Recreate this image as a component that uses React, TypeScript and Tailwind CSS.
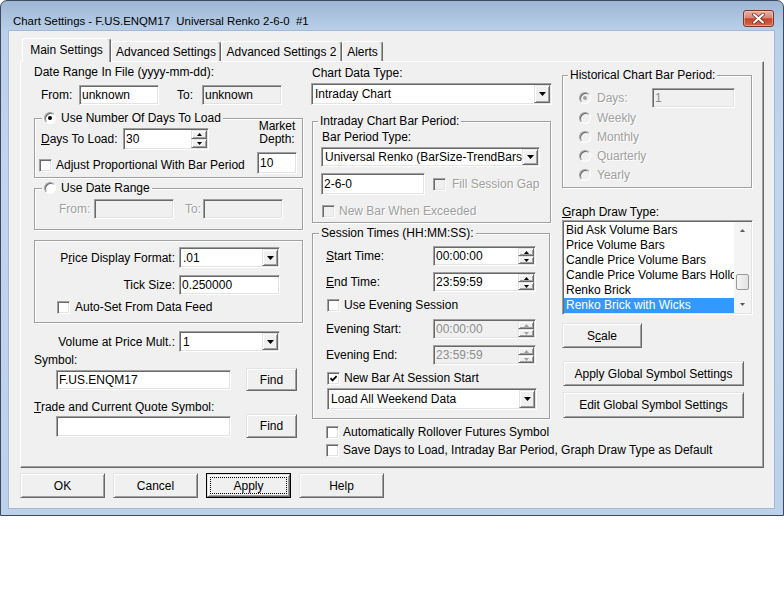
import React from "react";

const RAISED =
  "border border-t-[#e3e3e3] border-l-[#e3e3e3] border-r-[#696969] border-b-[#696969] bg-[#f0f0f0] shadow-[inset_1px_1px_0_#fff,inset_-1px_-1px_0_#a0a0a0]";
const SUNKEN =
  "border border-t-[#a0a0a0] border-l-[#a0a0a0] border-r-white border-b-white shadow-[inset_1px_1px_0_#696969,inset_-1px_-1px_0_#e3e3e3]";
const GROUP = "border border-[#a0a0a0] shadow-[1px_1px_0_#fff,inset_1px_1px_0_#fff]";
const DIS = "text-[#a0a0a0] [text-shadow:1px_1px_0_#fff]";
const TAB =
  "flex items-center justify-center rounded-t-[3px] border-l border-t border-r border-l-white border-t-white border-r-[#696969] shadow-[inset_-1px_0_0_#a0a0a0]";

function Tri({ up = false, color = "#000", small = false }: { up?: boolean; color?: string; small?: boolean }) {
  const w = small ? 5 : 7;
  const h = small ? 3 : 4;
  const d = up ? `M0 ${h}H${w}L${w / 2} 0Z` : `M0 0H${w}L${w / 2} ${h}Z`;
  return (
    <svg width={w} height={h} viewBox={`0 0 ${w} ${h}`}>
      <path d={d} fill={color} />
    </svg>
  );
}

function Spin({ disabled = false }: { disabled?: boolean }) {
  const c = disabled ? "#a0a0a0" : "#000";
  return (
    <div className="flex w-[16px] shrink-0 flex-col self-stretch">
      <div className={`${RAISED} flex flex-1 items-center justify-center`}>
        <Tri up small color={c} />
      </div>
      <div className={`${RAISED} flex flex-1 items-center justify-center`}>
        <Tri small color={c} />
      </div>
    </div>
  );
}

function Edit({
  className = "",
  value = "",
  grey = false,
  disabled = false,
  spin = false,
}: {
  className?: string;
  value?: string;
  grey?: boolean;
  disabled?: boolean;
  spin?: boolean;
}) {
  return (
    <div
      className={`${SUNKEN} ${grey || disabled ? "bg-[#f0f0f0]" : "bg-white"} flex shrink-0 items-stretch p-[1px] ${className}`}
    >
      <span
        className={`flex min-w-0 flex-1 items-center overflow-hidden whitespace-nowrap pl-[1px] ${disabled ? "text-[#8d8d8d]" : ""}`}
      >
        {value}
      </span>
      {spin && <Spin disabled={disabled} />}
    </div>
  );
}

function Combo({ className = "", value }: { className?: string; value: string }) {
  return (
    <div className={`${SUNKEN} flex shrink-0 items-stretch bg-white p-[1px] ${className}`}>
      <span className="flex min-w-0 flex-1 items-center overflow-hidden whitespace-nowrap pl-[2px]">{value}</span>
      <div className={`${RAISED} flex w-[16px] shrink-0 items-center justify-center`}>
        <Tri />
      </div>
    </div>
  );
}

function Check({ className = "", checked = false, disabled = false }: { className?: string; checked?: boolean; disabled?: boolean }) {
  return (
    <span
      className={`${SUNKEN} ${disabled ? "bg-[#f0f0f0]" : "bg-white"} flex h-[13px] w-[13px] shrink-0 items-center justify-center ${className}`}
    >
      {checked && (
        <svg width="7" height="7" viewBox="0 0 7 7">
          <path d="M0.5 3.2L2.6 5.4L6.6 1.2" stroke="#000" strokeWidth="1.7" fill="none" />
        </svg>
      )}
    </span>
  );
}

function Radio({ className = "", checked = false, disabled = false }: { className?: string; checked?: boolean; disabled?: boolean }) {
  return (
    <span
      className={`flex h-[12px] w-[12px] shrink-0 items-center justify-center rounded-full border border-t-[#a0a0a0] border-l-[#a0a0a0] border-r-white border-b-white shadow-[inset_1px_1px_0_#696969] ${disabled ? "bg-[#f0f0f0]" : "bg-white"} ${className}`}
    >
      {checked && <span className={`h-[4px] w-[4px] rounded-full ${disabled ? "bg-[#a0a0a0]" : "bg-black"}`} />}
    </span>
  );
}

function Btn({ className = "", children }: { className?: string; children: React.ReactNode }) {
  return <div className={`${RAISED} flex shrink-0 items-center justify-center ${className}`}>{children}</div>;
}

function Legend({ className = "", children }: { className?: string; children: React.ReactNode }) {
  return (
    <div className={`-mt-[8px] flex h-[14px] w-fit items-center whitespace-nowrap bg-[#f0f0f0] px-[2px] ${className}`}>
      {children}
    </div>
  );
}

function TimeRow({ label, value, disabled = false, className = "" }: { label: React.ReactNode; value: string; disabled?: boolean; className?: string }) {
  return (
    <div className={`flex h-[20px] items-center ${className}`}>
      <span className="ml-[13px] w-[107px]">{label}</span>
      <Edit className="h-[20px] w-[103px]" value={value} disabled={disabled} spin />
    </div>
  );
}

const drawTypes = [
  "Bid Ask Volume Bars",
  "Price Volume Bars",
  "Candle Price Volume Bars",
  "Candle Price Volume Bars Hollow",
  "Renko Brick",
  "Renko Brick with Wicks",
];

export default function App() {
  return (
    <div className="h-[608px] w-[784px] bg-white font-['Liberation_Sans',Arial,sans-serif] text-[12px] leading-[14px] text-black">
      <div className="flex h-[516px] w-[784px] flex-col rounded-t-[7px] border border-[#3b4a5e] bg-[linear-gradient(to_bottom,#9db6d4,#bad0e9_30px,#c1d5ec_160px,#bcd2ea)]">
        {/* title bar */}
        <div className="flex h-[29px] shrink-0 items-start pl-[12px] pr-[9px]">
          <span className="mt-[13px] whitespace-pre text-[11.4px]">Chart Settings - F.US.ENQM17  Universal Renko 2-6-0  #1</span>
          <div className="ml-auto mt-[9px] flex h-[17px] w-[31px] items-center justify-center rounded-[3px] border border-[#7d3328] bg-[linear-gradient(to_bottom,#eab0a2,#d8877a_45%,#c4432c_52%,#cf6a4e)] shadow-[inset_0_0_0_1px_rgba(255,220,210,0.45)]">
            <svg width="13" height="11" viewBox="0 0 13 11">
              <path d="M2 1.5L11 9.5M11 1.5L2 9.5" stroke="#6b2418" strokeWidth="3.6" strokeLinecap="round" />
              <path d="M2 1.5L11 9.5M11 1.5L2 9.5" stroke="#fff" strokeWidth="2.2" strokeLinecap="round" />
            </svg>
          </div>
        </div>

        {/* client area */}
        <div className="ml-[7px] mr-[8px] h-[479px] border border-[#a3b8d1] bg-[#f0f0f0] pl-[11px] pt-[7px]">
          {/* tabs */}
          <div className="flex h-[23px] items-end pl-[2px]">
            <div className={`${TAB} relative z-10 -mb-px h-[24px] w-[89px] bg-[#f0f0f0] pb-[1px]`}>Main Settings</div>
            <div className={`${TAB} h-[20px] w-[110px] pt-[1px]`}>Advanced Settings</div>
            <div className={`${TAB} h-[20px] w-[121px] pt-[1px]`}>Advanced Settings 2</div>
            <div className={`${TAB} h-[20px] w-[41px] pt-[1px]`}>Alerts</div>
          </div>

          {/* tab panel */}
          <div className="flex h-[407px] w-[744px] border border-t-white border-l-white border-r-[#696969] border-b-[#696969] pl-[13px] shadow-[inset_-1px_-1px_0_#a0a0a0]">
            {/* left column */}
            <div className="flex w-[269px] shrink-0 flex-col">
              <div className="mt-[3px] h-[14px]">Date Range In File (yyyy-mm-dd):</div>
              <div className="mt-[6px] flex h-[20px] items-center">
                <span className="ml-[7px] w-[38px]">From:</span>
                <Edit className="h-[20px] w-[80px]" value="unknown" />
                <span className="ml-[18px] w-[25px]">To:</span>
                <Edit className="h-[20px] w-[80px]" value="unknown" grey />
              </div>

              <div className={`${GROUP} mt-[13px] flex h-[60px]`}>
                <div className="flex w-[222px] flex-col">
                  <Legend className="ml-[7px]">
                    <Radio checked />
                    <span className="ml-[5px]">Use Number Of Days To Load</span>
                  </Legend>
                  <div className="mt-[3px] flex h-[22px] items-center">
                    <span className="ml-[6px] w-[82px]">
                      <u>D</u>ays To Load:
                    </span>
                    <Edit className="h-[22px] w-[86px]" value="30" spin />
                  </div>
                  <div className="mt-[8px] flex h-[14px] items-center">
                    <Check className="ml-[4px]" />
                    <span className="ml-[4px] whitespace-nowrap">Adjust Proportional With Bar Period</span>
                  </div>
                </div>
                <div className="flex w-[40px] flex-col items-center">
                  <div className="mt-[1px] text-center leading-[13px]">
                    Market
                    <br />
                    Depth:
                  </div>
                  <Edit className="mt-[6px] h-[22px] w-[40px]" value="10" />
                </div>
              </div>

              <div className={`${GROUP} mt-[10px] flex h-[42px] flex-col`}>
                <Legend className="ml-[7px]">
                  <Radio />
                  <span className="ml-[5px]">Use Date Range</span>
                </Legend>
                <div className="mt-[4px] flex h-[20px] items-center">
                  <span className={`ml-[24px] w-[35px] ${DIS}`}>From:</span>
                  <Edit className="h-[20px] w-[80px]" grey />
                  <span className={`ml-[11px] w-[18px] ${DIS}`}>To:</span>
                  <Edit className="h-[20px] w-[80px]" grey />
                </div>
              </div>

              <div className={`${GROUP} mt-[10px] flex h-[83px] flex-col`}>
                <div className="mt-[6px] flex h-[21px] items-center">
                  <span className="w-[140px] text-right">
                    P<u>r</u>ice Display Format:
                  </span>
                  <Combo className="ml-[4px] h-[21px] w-[101px]" value=".01" />
                </div>
                <div className="mt-[7px] flex h-[20px] items-center">
                  <span className="w-[140px] text-right">Tick Size:</span>
                  <Edit className="ml-[4px] h-[20px] w-[101px]" value="0.250000" />
                </div>
                <div className="mt-[5px] flex h-[14px] items-center">
                  <Check className="ml-[22px]" />
                  <span className="ml-[5px]">Auto-Set From Data Feed</span>
                </div>
              </div>

              <div className="mt-[8px] flex h-[21px] items-center">
                <span className="w-[141px] text-right">Volume at Price Mult.:</span>
                <Combo className="ml-[4px] h-[21px] w-[101px]" value="1" />
              </div>
              <div className="mt-[1px] h-[14px]">Symbol:</div>
              <div className="mt-[1px] flex h-[23px] items-center">
                <Edit className="ml-[22px] h-[20px] w-[175px]" value="F.US.ENQM17" />
                <Btn className="ml-[15px] h-[23px] w-[51px]">Find</Btn>
              </div>
              <div className="mt-[9px] h-[14px]">
                <u>T</u>rade and Current Quote Symbol:
              </div>
              <div className="flex h-[24px] items-center">
                <Edit className="ml-[22px] h-[21px] w-[175px]" />
                <Btn className="ml-[15px] h-[24px] w-[51px]">Find</Btn>
              </div>
            </div>

            {/* middle column */}
            <div className="ml-[8px] flex w-[241px] shrink-0 flex-col">
              <div className="ml-[1px] mt-[4px] h-[14px]">Chart Data Type:</div>
              <Combo className="mt-[3px] h-[22px] w-[241px]" value="Intraday Chart" />

              <div className={`${GROUP} ml-[1px] mt-[16px] flex h-[102px] w-[239px] flex-col`}>
                <Legend className="ml-[5px]">Intraday Chart Bar Period:</Legend>
                <div className="ml-[9px] mt-[2px] h-[14px]">Bar Period Type:</div>
                <Combo className="ml-[8px] mt-[3px] h-[20px] w-[219px]" value="Universal Renko (BarSize-TrendBars-Reversal)" />
                <div className="ml-[8px] mt-[6px] flex h-[22px] items-center">
                  <Edit className="h-[22px] w-[104px]" value="2-6-0" />
                  <Check disabled className="ml-[8px]" />
                  <span className={`ml-[6px] whitespace-nowrap ${DIS}`}>Fill Session Gap</span>
                </div>
                <div className="ml-[9px] mt-[9px] flex h-[14px] items-center">
                  <Check disabled />
                  <span className={`ml-[4px] whitespace-nowrap ${DIS}`}>New Bar When Exceeded</span>
                </div>
              </div>

              <div className={`${GROUP} ml-[1px] mt-[10px] flex h-[186px] w-[238px] flex-col`}>
                <Legend className="ml-[6px]">Session Times (HH:MM:SS):</Legend>
                <TimeRow
                  className="mt-[6px]"
                  label={
                    <>
                      <u>S</u>tart Time:
                    </>
                  }
                  value="00:00:00"
                />
                <TimeRow
                  className="mt-[6px]"
                  label={
                    <>
                      <u>E</u>nd Time:
                    </>
                  }
                  value="23:59:59"
                />
                <div className="ml-[14px] mt-[6px] flex h-[14px] items-center">
                  <Check />
                  <span className="ml-[4px]">Use Evening Session</span>
                </div>
                <TimeRow className="mt-[7px]" label="Evening Start:" value="00:00:00" disabled />
                <TimeRow className="mt-[6px]" label="Evening End:" value="23:59:59" disabled />
                <div className="ml-[14px] mt-[6px] flex h-[14px] items-center">
                  <Check checked />
                  <span className="ml-[4px]">New Bar At Session Start</span>
                </div>
                <Combo className="ml-[14px] mt-[3px] h-[22px] w-[210px]" value="Load All Weekend Data" />
              </div>

              <div className="ml-[15px] mt-[6px] flex h-[14px] items-center whitespace-nowrap">
                <Check />
                <span className="ml-[4px]">Automatically Rollover Futures Symbol</span>
              </div>
              <div className="ml-[15px] mt-[4px] flex h-[14px] items-center whitespace-nowrap">
                <Check />
                <span className="ml-[4px]">Save Days to Load, Intraday Bar Period, Graph Draw Type as Default</span>
              </div>
            </div>

            {/* right column */}
            <div className="ml-[10px] flex w-[191px] shrink-0 flex-col">
              <div className={`${GROUP} mt-[13px] flex h-[113px] w-[190px] flex-col`}>
                <Legend className="ml-[5px]">Historical Chart Bar Period:</Legend>
                <div className="mt-[6px] flex h-[20px] items-center">
                  <Radio checked disabled className="ml-[16px]" />
                  <span className={`ml-[6px] w-[55px] ${DIS}`}>Days:</span>
                  <Edit className="h-[20px] w-[83px]" value="1" disabled />
                </div>
                {["Weekly", "Monthly", "Quarterly", "Yearly"].map((p) => (
                  <div key={p} className="flex h-[19px] items-center">
                    <Radio disabled className="ml-[16px]" />
                    <span className={`ml-[6px] ${DIS}`}>{p}</span>
                  </div>
                ))}
              </div>

              <div className="mt-[17px] h-[14px]">
                <u>G</u>raph Draw Type:
              </div>
              <div className={`${SUNKEN} mt-[1px] flex h-[95px] w-[191px] bg-white p-[1px]`}>
                <div className="flex min-w-0 flex-1 flex-col pt-[1px]">
                  {drawTypes.map((t, i) => (
                    <div
                      key={t}
                      className={`h-[15px] overflow-hidden whitespace-nowrap pl-[2px] leading-[15px] ${i === drawTypes.length - 1 ? "bg-[#3399ff] text-white" : ""}`}
                    >
                      {t}
                    </div>
                  ))}
                </div>
                <div className="flex w-[17px] shrink-0 flex-col bg-[#f4f4f4]">
                  <div className="flex h-[17px] items-center justify-center">
                    <Tri up small color="#5a5a5a" />
                  </div>
                  <div className="flex-1">
                    <div className="mx-[2px] mt-[35px] h-[16px] rounded-[2px] border border-[#9a9a9a] bg-[linear-gradient(to_right,#f6f6f6,#e2e2e2)]" />
                  </div>
                  <div className="flex h-[17px] items-center justify-center">
                    <Tri small color="#5a5a5a" />
                  </div>
                </div>
              </div>

              <Btn className="mt-[8px] h-[25px] w-[80px]">
                S<u>c</u>ale
              </Btn>
              <Btn className="ml-[1px] mt-[13px] h-[25px] w-[181px]">Apply Global Symbol Settings</Btn>
              <Btn className="ml-[1px] mt-[6px] h-[26px] w-[181px]">Edit Global Symbol Settings</Btn>
            </div>
          </div>

          {/* dialog buttons */}
          <div className="mt-[5px] flex gap-[8px]">
            <Btn className="h-[25px] w-[85px]">OK</Btn>
            <Btn className="h-[25px] w-[85px]">Cancel</Btn>
            <div className="flex h-[25px] w-[85px] border border-black">
              <div className={`${RAISED} flex flex-1 p-[2px]`}>
                <div className="flex flex-1 items-center justify-center border border-dotted border-black">Apply</div>
              </div>
            </div>
            <Btn className="h-[25px] w-[85px]">Help</Btn>
          </div>
        </div>
      </div>
    </div>
  );
}
